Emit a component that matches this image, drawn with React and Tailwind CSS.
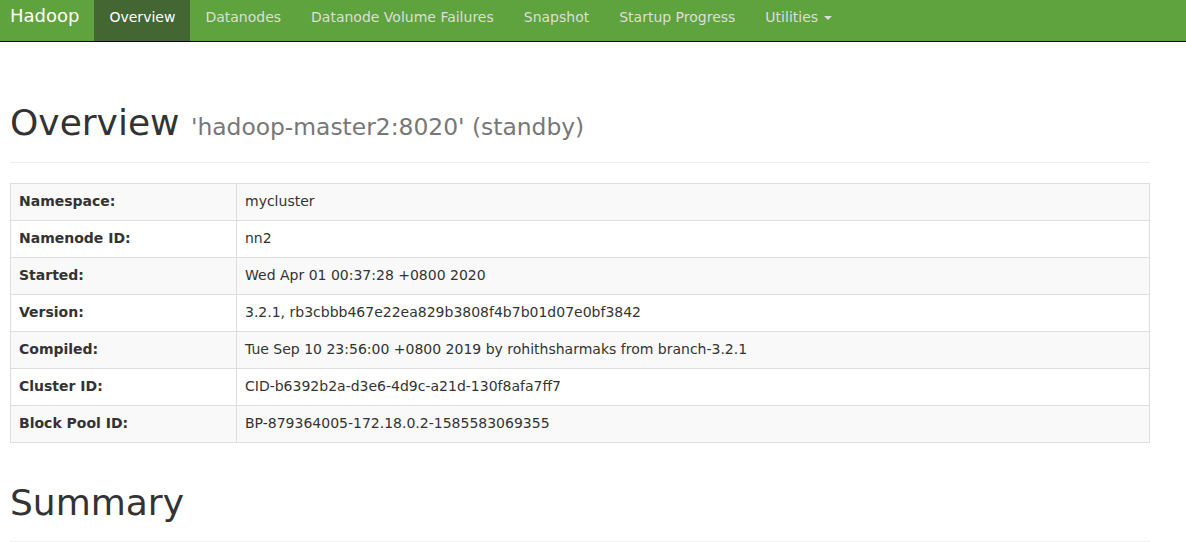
const rows = [
  ['Namespace:', 'mycluster'],
  ['Namenode ID:', 'nn2'],
  ['Started:', 'Wed Apr 01 00:37:28 +0800 2020'],
  ['Version:', '3.2.1, rb3cbbb467e22ea829b3808f4b7b01d07e0bf3842'],
  ['Compiled:', 'Tue Sep 10 23:56:00 +0800 2019 by rohithsharmaks from branch-3.2.1'],
  ['Cluster ID:', 'CID-b6392b2a-d3e6-4d9c-a21d-130f8afa7ff7'],
  ['Block Pool ID:', 'BP-879364005-172.18.0.2-1585583069355'],
]

const navItems = ['Overview', 'Datanodes', 'Datanode Volume Failures', 'Snapshot', 'Startup Progress']

export default function App() {
  return (
    <div className="min-h-[542px] bg-white text-[14px] leading-[20px] text-[#333]" style={{ fontFamily: '"DejaVu Sans", sans-serif' }}>
      {/* Navbar */}
      <nav className="h-[42px] bg-[#5fa33e] border-b border-black">
        <div className="flex h-[41px] pl-[10px]">
          <a className="pr-[15px] pt-[6px] text-[18px] leading-[20px] text-white">Hadoop</a>
          <ul className="flex">
            {navItems.map((item, i) => (
              <li key={item}>
                <a
                  className={
                    i === 0
                      ? 'block h-[41px] px-[15px] pt-[7px] bg-[#446633] text-white'
                      : 'block h-[41px] px-[15px] pt-[7px] text-[#dddddd]'
                  }
                >
                  {item}
                </a>
              </li>
            ))}
            <li>
              <a className="flex h-[41px] items-start px-[15px] pt-[7px] text-[#dddddd]">
                Utilities
                <span className="ml-[6px] mt-[9px] h-0 w-0 border-x-[4px] border-t-[4px] border-x-transparent border-t-[#dddddd]" />
              </a>
            </li>
          </ul>
        </div>
      </nav>

      <div className="ml-[10px] w-[1140px]">
        {/* Overview header */}
        <div className="mt-[61px] mb-[20px] border-b border-[#eeeeee] pb-[9px]">
          <h1 className="mb-[10px] text-[36px] leading-[1.1] font-normal">
            Overview{' '}
            <small className="text-[23.4px] text-[#777777]">'hadoop-master2:8020' (standby)</small>
          </h1>
        </div>

        {/* Info table */}
        <table className="w-full border-collapse border border-[#dddddd]">
          <tbody>
            {rows.map(([label, value], i) => (
              <tr key={label} className={i % 2 === 0 ? 'bg-[#f9f9f9]' : 'bg-white'}>
                <th className="w-[226px] border border-[#dddddd] px-[8px] pt-[7px] pb-[9px] text-left font-bold">{label}</th>
                <td className="border border-[#dddddd] px-[8px] pt-[7px] pb-[9px]">{value}</td>
              </tr>
            ))}
          </tbody>
        </table>

        {/* Summary header */}
        <div className="mt-[40px] mb-[20px] border-b border-[#eeeeee] pb-[9px]">
          <h1 className="mb-[10px] text-[36px] leading-[1.1] font-normal">Summary</h1>
        </div>
      </div>
    </div>
  )
}
